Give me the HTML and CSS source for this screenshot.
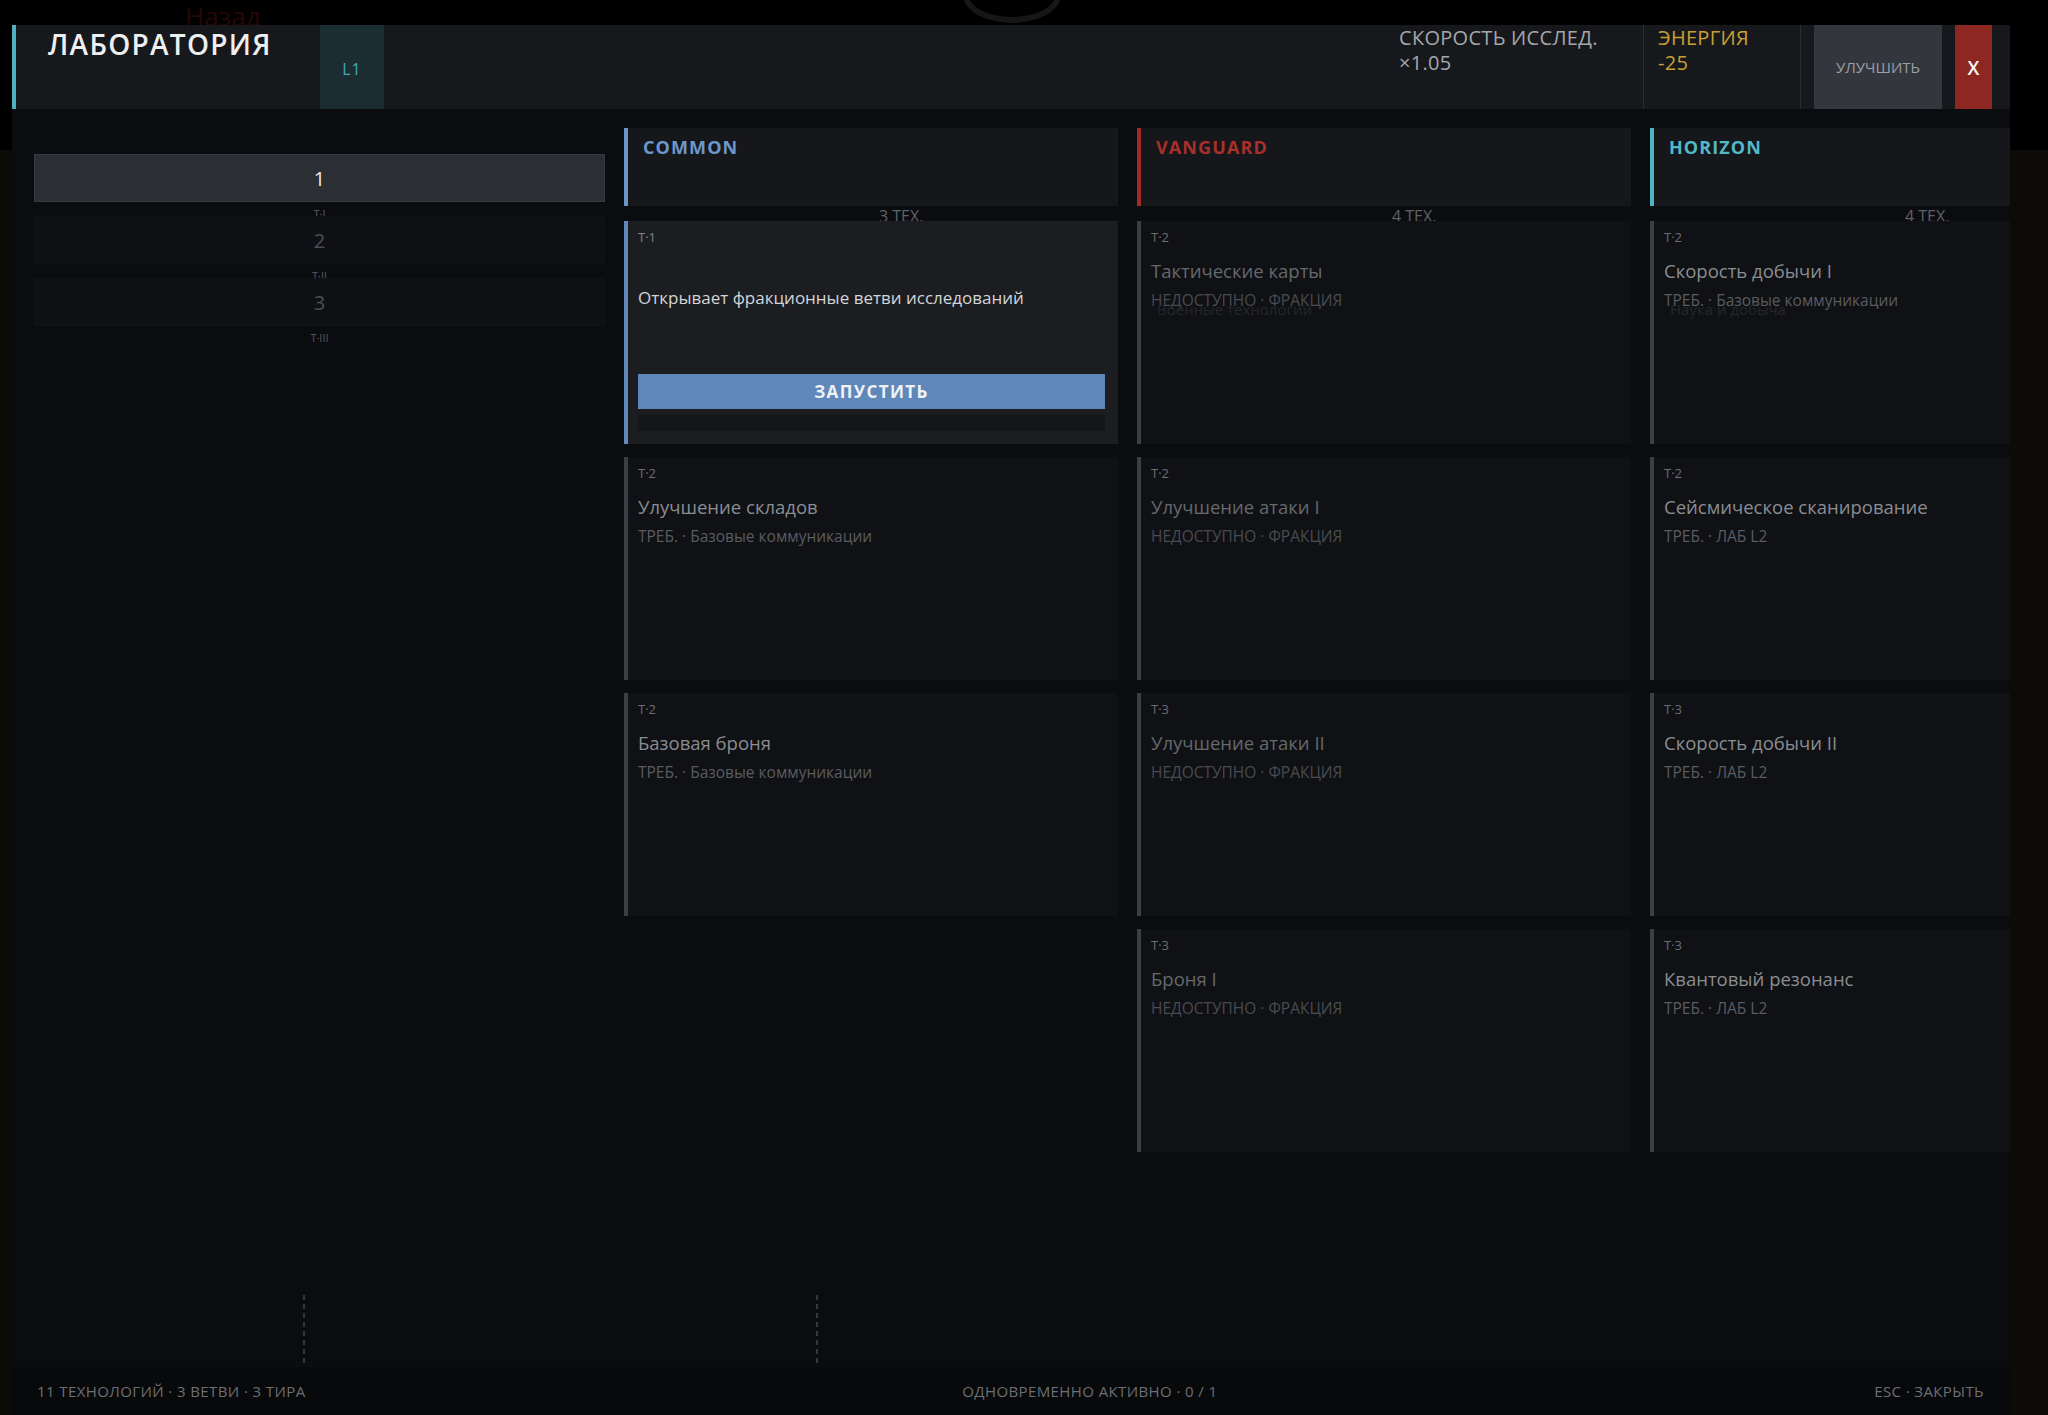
FILE: index.html
```
<!DOCTYPE html>
<html lang="ru">
<head>
    <meta charset="UTF-8">
    <title>Лаборатория</title>
    <link rel="stylesheet" href="styles.css">
</head>
<body>
    <div class="backdrop">
        <span class="back-link">Назад</span>
        <span class="ring"></span>
    </div>

    <div class="lab">
        <header class="lab-head">
            <div class="lab-title">ЛАБОРАТОРИЯ</div>
            <div class="lab-level">L1</div>
            <div class="spacer"></div>
            <div class="stat">
                <div>СКОРОСТЬ ИССЛЕД.</div>
                <div>×1.05</div>
            </div>
            <div class="stat energy">
                <div>ЭНЕРГИЯ</div>
                <div>-25</div>
            </div>
            <button class="upgrade">УЛУЧШИТЬ</button>
            <button class="close">X</button>
        </header>

        <div class="lab-main">
            <aside class="tiers">
                <div class="tier active">
                    <div class="tier-btn">1</div>
                    <div class="tier-label">T·I</div>
                </div>
                <div class="tier">
                    <div class="tier-btn">2</div>
                    <div class="tier-label">T·II</div>
                </div>
                <div class="tier">
                    <div class="tier-btn">3</div>
                    <div class="tier-label">T·III</div>
                </div>
            </aside>

            <!-- общая ветка -->
            <section class="branch common">
                <div class="branch-head">COMMON</div>
                <div class="branch-count">3 ТЕХ.</div>
                <div class="card active">
                    <div class="card-tag">T·1</div>
                    <div class="card-desc">Открывает фракционные ветви исследований</div>
                    <button class="launch">ЗАПУСТИТЬ</button>
                    <div class="progress"></div>
                </div>
                <div class="card">
                    <div class="card-tag">T·2</div>
                    <div class="card-title">Улучшение складов</div>
                    <div class="card-sub">ТРЕБ. · Базовые коммуникации</div>
                </div>
                <div class="card">
                    <div class="card-tag">T·2</div>
                    <div class="card-title">Базовая броня</div>
                    <div class="card-sub">ТРЕБ. · Базовые коммуникации</div>
                </div>
            </section>

            <!-- фракция vanguard -->
            <section class="branch vanguard">
                <div class="branch-head">VANGUARD</div>
                <div class="branch-count">4 ТЕХ.</div>
                <div class="card locked">
                    <div class="card-tag">T·2</div>
                    <div class="card-title">Тактические карты</div>
                    <div class="card-sub">НЕДОСТУПНО · ФРАКЦИЯ</div>
                    <div class="ghost">Военные технологии</div>
                </div>
                <div class="card locked">
                    <div class="card-tag">T·2</div>
                    <div class="card-title">Улучшение атаки I</div>
                    <div class="card-sub">НЕДОСТУПНО · ФРАКЦИЯ</div>
                </div>
                <div class="card locked">
                    <div class="card-tag">T·3</div>
                    <div class="card-title">Улучшение атаки II</div>
                    <div class="card-sub">НЕДОСТУПНО · ФРАКЦИЯ</div>
                </div>
                <div class="card locked">
                    <div class="card-tag">T·3</div>
                    <div class="card-title">Броня I</div>
                    <div class="card-sub">НЕДОСТУПНО · ФРАКЦИЯ</div>
                </div>
            </section>

            <!-- фракция horizon -->
            <section class="branch horizon">
                <div class="branch-head">HORIZON</div>
                <div class="branch-count">4 ТЕХ.</div>
                <div class="card">
                    <div class="card-tag">T·2</div>
                    <div class="card-title">Скорость добычи I</div>
                    <div class="card-sub">ТРЕБ. · Базовые коммуникации</div>
                    <div class="ghost">Наука и добыча</div>
                </div>
                <div class="card">
                    <div class="card-tag">T·2</div>
                    <div class="card-title">Сейсмическое сканирование</div>
                    <div class="card-sub">ТРЕБ. · ЛАБ L2</div>
                </div>
                <div class="card">
                    <div class="card-tag">T·3</div>
                    <div class="card-title">Скорость добычи II</div>
                    <div class="card-sub">ТРЕБ. · ЛАБ L2</div>
                </div>
                <div class="card">
                    <div class="card-tag">T·3</div>
                    <div class="card-title">Квантовый резонанс</div>
                    <div class="card-sub">ТРЕБ. · ЛАБ L2</div>
                </div>
            </section>
        </div>

        <div class="rail">
            <span class="dash"></span>
            <span class="dash"></span>
        </div>

        <footer class="lab-foot">
            <span>11 ТЕХНОЛОГИЙ · 3 ВЕТВИ · 3 ТИРА</span>
            <span>ОДНОВРЕМЕННО АКТИВНО · 0 / 1</span>
            <span>ESC · ЗАКРЫТЬ</span>
        </footer>
    </div>
</body>
</html>
```

FILE: styles.css
```
/* общие */
* {
    box-sizing: border-box;
}

body {
    margin: 0;
    height: 1415px;
    overflow: hidden;
    background: linear-gradient(#000 0, #000 150px, #0d0b08 150px);
    font-family: "Open Sans", "Noto Sans", sans-serif;
    color: #9a9da2;
}

button {
    font-family: inherit;
    border: none;
    cursor: pointer;
}

/* фон за окном */
.backdrop {
    height: 25px;
    overflow: hidden;
    display: flex;
    align-items: flex-start;
}

.back-link {
    margin-left: 185px;
    margin-top: 1px;
    font-size: 26px;
    line-height: 30px;
    color: #260707;
}

.ring {
    width: 98px;
    height: 56px;
    margin-left: 702px;
    margin-top: -33px;
    border: 6px solid #161618;
    border-radius: 50%;
}

/* окно лаборатории */
.lab {
    margin-left: 12px;
    width: 1998px;
    height: 1390px;
    display: flex;
    flex-direction: column;
    background-color: #0b0c0f;
}

.lab-head {
    height: 84px;
    flex-shrink: 0;
    display: flex;
    align-items: stretch;
    background-color: #17181c;
    border-left: 4px solid #4fb0c2;
    padding-right: 18px;
}

.lab-title {
    width: 304px;
    padding-left: 32px;
    padding-top: 2px;
    font-size: 28px;
    line-height: 34px;
    font-weight: 600;
    letter-spacing: 1.3px;
    color: #eeeff1;
}

.lab-level {
    width: 64px;
    background-color: #1c2d31;
    color: #47a7b9;
    font-size: 16px;
    letter-spacing: 1px;
    display: flex;
    align-items: center;
    justify-content: center;
    padding-top: 3px;
}

.spacer {
    flex: 1;
}

.stat {
    width: 258px;
    padding-left: 14px;
    font-size: 20px;
    line-height: 25px;
    letter-spacing: 0.3px;
    color: #a4a7ac;
}

.stat.energy {
    width: 158px;
    color: #c9a034;
    border-left: 1px solid #2b2d32;
    border-right: 1px solid #2b2d32;
}

.upgrade {
    width: 128px;
    margin-left: 13px;
    background-color: #33363d;
    color: #9c9fa5;
    font-size: 15px;
    padding-top: 0;
}

.close {
    width: 37px;
    margin-left: 13px;
    background-color: #8d2722;
    color: #f4f4f4;
    font-size: 19px;
    font-weight: 600;
    padding: 2px 0 0;
}

/* основная часть */
.lab-main {
    flex: 1;
    min-height: 0;
    display: flex;
    gap: 19px;
    padding: 19px 0 0 22px;
    overflow: hidden;
}

.tiers {
    width: 571px;
    flex-shrink: 0;
    padding-top: 26px;
}

.tier-btn {
    position: relative;
    height: 48px;
    display: flex;
    align-items: center;
    justify-content: center;
    background-color: #0e1013;
    border: 1px solid #101215;
    font-size: 20px;
    color: #4b4e54;
}

.tier.active .tier-btn {
    background-color: #2b2e33;
    border-color: #363940;
    color: #e8e9eb;
}

.tier-label {
    height: 16px;
    margin-top: 4px;
    margin-bottom: -6px;
    font-size: 11px;
    line-height: 16px;
    text-align: center;
    color: #585b60;
}

/* ветки */
.branch {
    width: 494px;
    flex-shrink: 0;
}

.branch-head {
    height: 78px;
    background-color: #16171b;
    border-left: 4px solid #6a93c7;
    padding: 7px 0 0 15px;
    font-size: 18px;
    line-height: 24px;
    font-weight: 700;
    letter-spacing: 1.1px;
    color: #6d98cd;
}

.vanguard .branch-head {
    border-left-color: #a32a25;
    color: #a8302a;
}

.horizon .branch-head {
    border-left-color: #4eb4c4;
    color: #52b8c8;
}

.branch-count {
    height: 15px;
    overflow: hidden;
    padding-left: calc(50% + 8px);
    padding-top: 3px;
    font-size: 16px;
    line-height: 15px;
    color: #5f6267;
}

.card {
    height: 223px;
    margin-bottom: 13px;
    display: flex;
    flex-direction: column;
    background-color: #101114;
    border-left: 4px solid #3b3e43;
    padding: 8px 13px 13px 10px;
}

.card.active {
    background-color: #1c1d21;
    border-left-color: #6189bb;
}

.card-tag {
    font-size: 13px;
    line-height: 16px;
    color: #6b6e73;
}

.card.active .card-tag {
    color: #7f8287;
}

.card-title {
    margin-top: 14px;
    font-size: 18.5px;
    line-height: 24px;
    color: #8a8d92;
}

.card-sub {
    margin-top: 7px;
    font-size: 15.5px;
    line-height: 20px;
    color: #595c61;
}

.card.locked .card-title {
    color: #65686d;
}

.card.locked .card-sub {
    color: #484b50;
}

.ghost {
    margin-top: -11px;
    margin-left: 6px;
    font-size: 15px;
    line-height: 20px;
    color: #24262a;
}

.card-desc {
    margin-top: 42px;
    font-size: 17px;
    line-height: 22px;
    color: #d3d5d8;
}

.launch {
    margin-top: auto;
    height: 35px;
    background-color: #5f87b9;
    color: #eef2f7;
    font-size: 17px;
    font-weight: 700;
    letter-spacing: 1.4px;
}

.progress {
    height: 16px;
    margin-top: 6px;
    background-color: #15161a;
}

/* низ */
.rail {
    height: 72px;
    flex-shrink: 0;
    display: flex;
    gap: 511px;
    padding-left: 291px;
}

.dash {
    width: 2px;
    height: 71px;
    background: repeating-linear-gradient(#35373c 0, #35373c 5px, transparent 5px, transparent 9px);
}

.lab-foot {
    height: 48px;
    flex-shrink: 0;
    display: flex;
    align-items: center;
    justify-content: space-between;
    padding: 0 26px 0 25px;
    background-color: #08090b;
    font-size: 15px;
    letter-spacing: 0.4px;
    color: #6c6f74;
}
```
